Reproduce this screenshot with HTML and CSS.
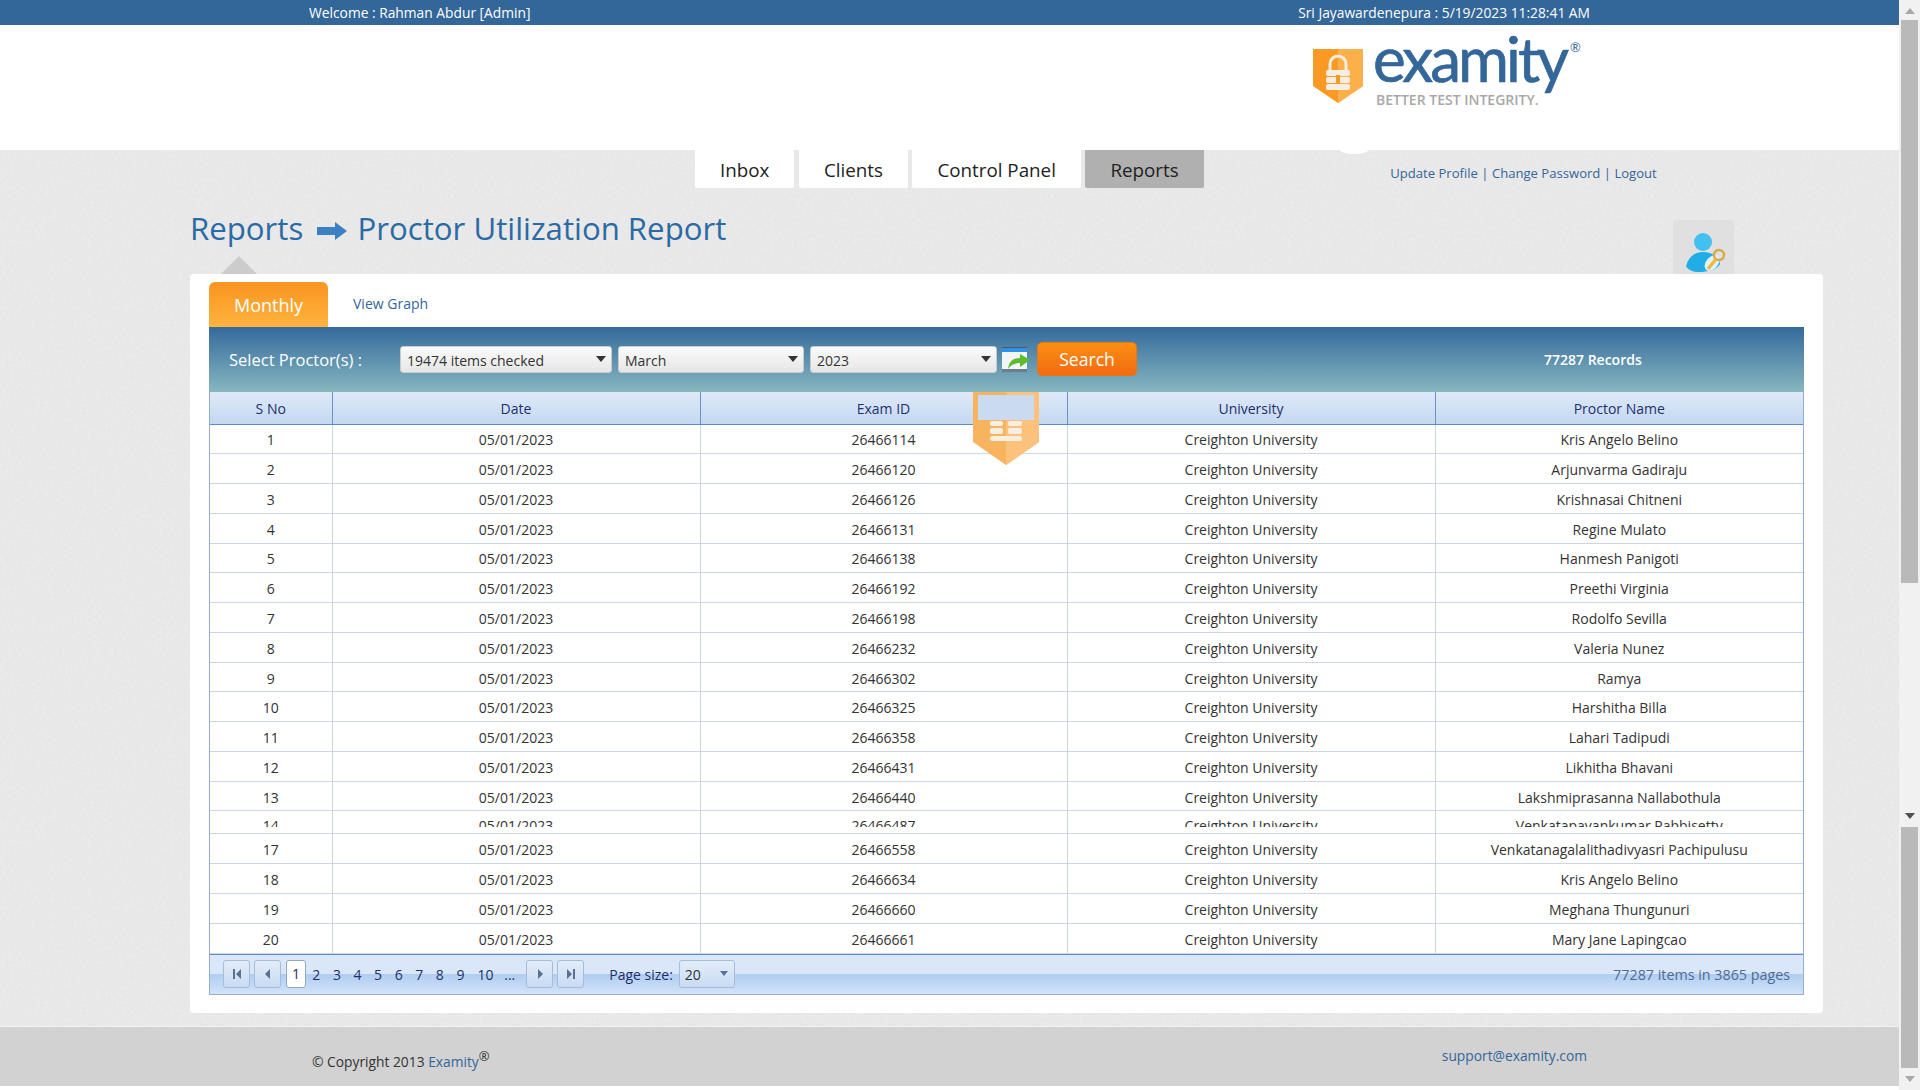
FILE: index.html
```html
<!DOCTYPE html>
<html lang="en">
<head>
    <meta charset="UTF-8">
    <title>Proctor Utilization Report</title>
    <link rel="stylesheet" href="styles.css">
</head>
<body>
    <div class="page">
        <div class="topbar">
            <span>Welcome : Rahman Abdur [Admin]</span>
            <span>Sri Jayawardenepura : 5/19/2023 11:28:41 AM</span>
        </div>

        <div class="header">
            <div class="logo">
                <svg class="logo-shield" width="50" height="54" viewBox="0 0 50 54">
                    <path d="M0 0H50V37L25 54L0 37Z" fill="#fa9a24"/>
                    <path d="M25 0H50V37L25 54Z" fill="#fdb04a"/>
                    <path d="M17 21V15a8 8 0 0 1 16 0V21" fill="none" stroke="#f6eee2" stroke-width="3"/>
                    <rect x="13" y="21" width="24" height="6" rx="2" fill="#f6eee2"/>
                    <rect x="13" y="28" width="24" height="6" rx="2" fill="#f6eee2"/>
                    <rect x="13" y="35" width="24" height="6" rx="2" fill="#f6eee2"/>
                    <rect x="23" y="26" width="4" height="9" fill="#fa9a24"/>
                </svg>
                <div class="logo-words">
                    <div class="logo-name">examity<sup>®</sup></div>
                    <div class="logo-tag">BETTER TEST INTEGRITY.</div>
                </div>
            </div>
        </div>

        <div class="main">
            <div class="nav-row">
                <a class="nav-tab">Inbox</a>
                <a class="nav-tab">Clients</a>
                <a class="nav-tab">Control Panel</a>
                <a class="nav-tab active">Reports</a>
                <div class="user-links">
                    <a>Update Profile</a> | <a>Change Password</a> | <a>Logout</a>
                </div>
            </div>

            <div class="title-row">
                <h1>Reports
                    <svg class="title-arrow" width="30" height="18" viewBox="0 0 30 18"><path d="M0 5H18V0L30 9L18 18V13H0Z" fill="#3a80c2"/></svg>
                    Proctor Utilization Report</h1>
                <div class="profile-icon">
                    <svg width="61" height="55" viewBox="0 0 61 55">
                        <circle cx="30" cy="22" r="9" fill="#43c0f0"/>
                        <path d="M13 46C16 36 22 32 30 32C38 32 46 36 47 44C44 50 34 52 26 52C20 52 15 50 13 46Z" fill="#21ade6"/>
                        <ellipse cx="39" cy="43" rx="6" ry="9" transform="rotate(40 39 43)" fill="#e4f3fb"/>
                        <circle cx="46" cy="35" r="5" fill="none" stroke="#d9a84a" stroke-width="2.5"/>
                        <path d="M43 39L35 49" stroke="#f0b93a" stroke-width="3.5" fill="none"/>
                    </svg>
                </div>
            </div>

            <div class="card">
                <span class="card-pointer"></span>
                <div class="tabs">
                    <a class="tab active">Monthly</a>
                    <a class="tab">View Graph</a>
                </div>
                <div class="toolbar">
                    <label class="toolbar-label">Select Proctor(s) :</label>
                    <div class="combo combo-proctor">19474 items checked</div>
                    <div class="combo combo-month">March</div>
                    <div class="combo combo-year">2023</div>
                    <svg class="export-icon" width="28" height="26" viewBox="0 0 28 26">
                        <rect x="0" y="0" width="25" height="25" fill="#f2f4f6"/>
                        <rect x="0" y="0" width="25" height="1" fill="#4a5a6a"/>
                        <rect x="0" y="1" width="25" height="4" fill="#2f92e6"/>
                        <rect x="0" y="22" width="25" height="3" fill="#6d7d8a"/>
                        <path d="M6 22C7 15 11 11 18 11V7L28 13L18 20V16C13 16 9 18 6 22Z" fill="#5cbb2f"/>
                    </svg>
                    <button class="search-btn" type="button">Search</button>
                    <span class="records">77287 Records</span>
                </div>

                <div class="grid">
                    <svg class="watermark" width="66" height="73" viewBox="0 0 66 73">
                        <path d="M0 0H66V50L33 73L0 50Z" fill="#f8b35f"/>
                        <path d="M33 0H66V50L33 73Z" fill="#fcc27c"/>
                        <rect x="5" y="3" width="56" height="25" fill="#c9daf1"/>
                        <rect x="17" y="29" width="13" height="5" rx="2" fill="#f7eee2"/>
                        <rect x="35" y="29" width="14" height="5" rx="2" fill="#f7eee2"/>
                        <rect x="17" y="36" width="13" height="6" rx="2" fill="#f7eee2"/>
                        <rect x="35" y="36" width="14" height="6" rx="2" fill="#f7eee2"/>
                        <rect x="17" y="44" width="32" height="5" rx="2.5" fill="#f7eee2"/>
                    </svg>
                    <table>
                        <colgroup>
                            <col class="col-no"><col class="col-date"><col class="col-exam"><col class="col-uni"><col>
                        </colgroup>
                        <thead>
                            <tr><th>S No</th><th>Date</th><th>Exam ID</th><th>University</th><th>Proctor Name</th></tr>
                        </thead>
                        <tbody>
                            <tr><td>1</td><td>05/01/2023</td><td>26466114</td><td>Creighton University</td><td>Kris Angelo Belino</td></tr>
                            <tr><td>2</td><td>05/01/2023</td><td>26466120</td><td>Creighton University</td><td>Arjunvarma Gadiraju</td></tr>
                            <tr><td>3</td><td>05/01/2023</td><td>26466126</td><td>Creighton University</td><td>Krishnasai Chitneni</td></tr>
                            <tr><td>4</td><td>05/01/2023</td><td>26466131</td><td>Creighton University</td><td>Regine Mulato</td></tr>
                            <tr><td>5</td><td>05/01/2023</td><td>26466138</td><td>Creighton University</td><td>Hanmesh Panigoti</td></tr>
                            <tr><td>6</td><td>05/01/2023</td><td>26466192</td><td>Creighton University</td><td>Preethi Virginia</td></tr>
                            <tr><td>7</td><td>05/01/2023</td><td>26466198</td><td>Creighton University</td><td>Rodolfo Sevilla</td></tr>
                            <tr><td>8</td><td>05/01/2023</td><td>26466232</td><td>Creighton University</td><td>Valeria Nunez</td></tr>
                            <tr><td>9</td><td>05/01/2023</td><td>26466302</td><td>Creighton University</td><td>Ramya</td></tr>
                            <tr><td>10</td><td>05/01/2023</td><td>26466325</td><td>Creighton University</td><td>Harshitha Billa</td></tr>
                            <tr><td>11</td><td>05/01/2023</td><td>26466358</td><td>Creighton University</td><td>Lahari Tadipudi</td></tr>
                            <tr><td>12</td><td>05/01/2023</td><td>26466431</td><td>Creighton University</td><td>Likhitha Bhavani</td></tr>
                            <tr><td>13</td><td>05/01/2023</td><td>26466440</td><td>Creighton University</td><td>Lakshmiprasanna Nallabothula</td></tr>
                            <tr class="row-cut">
                                <td><div>14</div></td><td><div>05/01/2023</div></td><td><div>26466487</div></td><td><div>Creighton University</div></td><td><div>Venkatapavankumar Pabbisetty</div></td>
                            </tr>
                            <tr><td>17</td><td>05/01/2023</td><td>26466558</td><td>Creighton University</td><td>Venkatanagalalithadivyasri Pachipulusu</td></tr>
                            <tr><td>18</td><td>05/01/2023</td><td>26466634</td><td>Creighton University</td><td>Kris Angelo Belino</td></tr>
                            <tr><td>19</td><td>05/01/2023</td><td>26466660</td><td>Creighton University</td><td>Meghana Thungunuri</td></tr>
                            <tr><td>20</td><td>05/01/2023</td><td>26466661</td><td>Creighton University</td><td>Mary Jane Lapingcao</td></tr>
                        </tbody>
                    </table>
                    <div class="pager">
                        <a class="pg-btn"><svg width="10" height="10" viewBox="0 0 10 10"><path d="M1 0H3V10H1ZM9 0V10L4 5Z" fill="#5a708f"/></svg></a>
                        <a class="pg-btn"><svg width="10" height="10" viewBox="0 0 10 10"><path d="M7 0V10L2 5Z" fill="#5a708f"/></svg></a>
                        <div class="pg-numbers">
                            <a class="pg-num current">1</a><a class="pg-num">2</a><a class="pg-num">3</a><a class="pg-num">4</a><a class="pg-num">5</a><a class="pg-num">6</a><a class="pg-num">7</a><a class="pg-num">8</a><a class="pg-num">9</a><a class="pg-num ten">10</a><a class="pg-num dots">...</a>
                        </div>
                        <a class="pg-btn"><svg width="10" height="10" viewBox="0 0 10 10"><path d="M3 0V10L8 5Z" fill="#5a708f"/></svg></a>
                        <a class="pg-btn"><svg width="10" height="10" viewBox="0 0 10 10"><path d="M1 0V10L6 5ZM7 0H9V10H7Z" fill="#5a708f"/></svg></a>
                        <span class="pg-label">Page size:</span>
                        <div class="pg-size">20</div>
                        <span class="pg-info">77287 items in 3865 pages</span>
                    </div>
                </div>
            </div>
        </div>

        <div class="footer">
            <div class="copyright">© Copyright 2013 <a>Examity</a><sup>®</sup></div>
            <a class="support">support@examity.com</a>
        </div>
    </div>

    <div class="scrollbar">
        <span class="sb-arrow up"></span>
        <div class="sb-thumb first"></div>
        <div class="sb-gap"></div>
        <span class="sb-arrow down"></span>
        <div class="sb-thumb second"></div>
        <span class="sb-arrow down light"></span>
    </div>
</body>
</html>
```

FILE: styles.css
```css
/* Styles for the page */
* {
    box-sizing: border-box;
}

body {
    font-family: "Open Sans", Arial, sans-serif;
    font-size: 14px;
    color: #333;
    background-color: #fff;
    margin: 0;
    height: 1090px;
    overflow: hidden;
    display: flex;
}

a {
    color: #336699;
    text-decoration: none;
}

.page {
    width: 1899px;
    height: 1086px;
    display: flex;
    flex-direction: column;
}

/* top strip */
.topbar {
    height: 25px;
    background-color: #336699;
    color: #fff;
    font-size: 13.8px;
    padding: 0 309px;
    display: flex;
    justify-content: space-between;
    align-items: center;
    line-height: 25px;
}

.header {
    height: 125px;
    background-color: #fff;
    padding: 13px 0 0 1313px;
    position: relative;
}

.header::after {
    content: "";
    position: absolute;
    left: 1340px;
    bottom: -4px;
    width: 28px;
    height: 8px;
    border-radius: 50%;
    background-color: #fff;
}

.logo {
    display: flex;
    align-items: flex-start;
}

.logo-shield {
    margin-top: 11px;
}

.logo-words {
    margin: -10px 0 0 10px;
}

.logo-name {
    font-family: Lato, "Open Sans", sans-serif;
    font-size: 62px;
    line-height: 60px;
    color: #336699;
    letter-spacing: -3px;
    -webkit-text-stroke: 0.7px #336699;
    white-space: nowrap;
}

.logo-name sup {
    font-size: 13px;
    line-height: 1;
    letter-spacing: 0;
    -webkit-text-stroke: 0;
    vertical-align: 30px;
    margin-left: 4px;
}

.logo-tag {
    font-size: 14px;
    line-height: 14px;
    font-weight: 600;
    color: #a8a8a8;
    margin: 5px 0 0 3px;
    white-space: nowrap;
}

.main {
    flex: 1;
    background-color: #e7e7e7;
    background-image: url("data:image/svg+xml,%3Csvg xmlns='http://www.w3.org/2000/svg' width='300' height='300'%3E%3Cfilter id='n'%3E%3CfeTurbulence type='fractalNoise' baseFrequency='.35' numOctaves='3'/%3E%3CfeColorMatrix values='0 0 0 0 1 0 0 0 0 1 0 0 0 0 1 0 0 0 .9 -.3'/%3E%3C/filter%3E%3Crect width='300' height='300' filter='url(%23n)' opacity='.35'/%3E%3C/svg%3E");
}

/* main menu */
.nav-row {
    height: 39px;
    padding-left: 695px;
    display: flex;
    gap: 4.5px;
}

.nav-tab {
    background-color: #fff;
    color: #222;
    font-size: 18.8px;
    line-height: 40px;
    padding: 0 25px;
    height: 38px;
    border-radius: 0 0 2px 2px;
}

.nav-tab.active {
    background-color: #b0b0b0;
}

.user-links {
    margin-left: 182px;
    font-size: 13.1px;
    line-height: 46px;
    color: #336699;
}

.title-row {
    height: 85px;
    padding-left: 190px;
    display: flex;
    justify-content: space-between;
}

h1 {
    margin: 17px 0 0;
    font-size: 31.2px;
    font-weight: 400;
    line-height: 44px;
    color: #2a6aa5;
}

.title-arrow {
    margin: 0 2px 0 6px;
}

.profile-icon {
    width: 61px;
    height: 55px;
    margin: 31px 165px 0 0;
    background-color: #e0e0e0;
    border-radius: 3px;
}

/* white panel */
.card {
    position: relative;
    width: 1633px;
    height: 739px;
    margin-left: 190px;
    padding: 8px 19px 0;
    background-color: #fff;
    border-radius: 4px;
}

.card-pointer {
    position: absolute;
    left: 31px;
    top: -18px;
    border-left: 18px solid transparent;
    border-right: 18px solid transparent;
    border-bottom: 18px solid #ccc;
}

.tabs {
    display: flex;
    height: 45px;
}

.tab {
    padding: 0 25px;
    line-height: 44px;
}

.tab.active {
    width: 119px;
    padding: 0;
    text-align: center;
    font-size: 18px;
    line-height: 46px;
    color: #fff;
    background: linear-gradient(#f9951f, #ffb340);
    border-radius: 6px 6px 0 0;
}

.toolbar {
    height: 65px;
    background: linear-gradient(#346a9c, #87b7c0);
    display: flex;
    align-items: center;
    color: #fff;
}

.toolbar-label {
    width: 191px;
    padding-left: 20px;
    font-size: 16.5px;
}

.combo {
    height: 27px;
    margin-right: 6px;
    padding-left: 6px;
    line-height: 28px;
    color: #333;
    background: linear-gradient(#fbfbfb, #e6e6e6);
    border: 1px solid #c8ccd0;
    border-radius: 3px;
    position: relative;
}

.combo::after {
    content: "";
    position: absolute;
    right: 5px;
    top: 9px;
    border-left: 5px solid transparent;
    border-right: 5px solid transparent;
    border-top: 6px solid #333;
}

.combo-proctor {
    width: 212px;
}

.combo-month {
    width: 186px;
}

.combo-year {
    width: 187px;
    margin-right: 5px;
}

.export-icon {
    margin-right: 7px;
}

.search-btn {
    width: 100px;
    height: 34px;
    margin-bottom: 1px;
    font-family: inherit;
    font-size: 17.6px;
    color: #fff;
    background: linear-gradient(#fb8f12, #f26a12);
    border: 1px solid #e9760f;
    border-radius: 5px;
    cursor: pointer;
}

.records {
    margin-left: 407px;
    font-weight: 600;
}

/* report grid */
.grid {
    position: relative;
    border: 1px solid #92aed3;
    border-top: 0;
}

.watermark {
    position: absolute;
    left: 763px;
    top: 0;
}

table {
    width: 100%;
    border-collapse: collapse;
    table-layout: fixed;
}

.col-no {
    width: 122px;
}

.col-date,
.col-uni {
    width: 368px;
}

.col-exam {
    width: 367px;
}

th {
    height: 32px;
    padding: 2px 0 0;
    font-size: 14px;
    font-weight: 400;
    color: #1e2f6b;
    background: linear-gradient(#dfe9f7, #c3d8f1);
    border-right: 1px solid #6c90c8;
    border-bottom: 1px solid #5d8ccb;
}

td {
    height: 29.77px;
    padding: 2px 0 0;
    text-align: center;
    border-right: 1px solid #cdd6e6;
    border-bottom: 1px solid #cdd6e6;
}

th:last-child,
td:last-child {
    border-right: 0;
}

.row-cut td {
    height: 23px;
    padding: 0;
    vertical-align: top;
}

.row-cut div {
    height: 16px;
    line-height: 30px;
    overflow: hidden;
}

.pager {
    height: 40px;
    padding-left: 13px;
    display: flex;
    align-items: center;
    background: linear-gradient(#d9e7f9 0, #d9e7f9 49%, #b0cdf2 50%, #d3e3f9 100%);
    border-top: 1px solid #5d8ccb;
}

.pg-btn {
    width: 27px;
    height: 28px;
    margin-right: 4px;
    display: flex;
    justify-content: center;
    align-items: center;
    background: linear-gradient(#e3edfa, #c8dbf3);
    border: 1px solid #a5bcdc;
    border-radius: 3px;
}

.pg-numbers {
    display: flex;
    align-items: center;
    margin: 0 7px 0 1px;
}

.pg-num {
    width: 20.6px;
    text-align: center;
    color: #1e2f6b;
}

.pg-num.ten {
    width: 29.5px;
}

.pg-num.dots {
    width: 19px;
}

.pg-num.current {
    width: 20px;
    height: 28px;
    line-height: 26px;
    background-color: #fff;
    border: 1px solid #8fa8cc;
    border-radius: 3px;
}

.pg-label {
    margin-left: 21px;
    color: #1e2f6b;
}

.pg-size {
    width: 56px;
    height: 28px;
    margin-left: 6px;
    padding-left: 5px;
    line-height: 28px;
    background: linear-gradient(#e3edfa, #c8dbf3);
    border: 1px solid #a5bcdc;
    border-radius: 3px;
    position: relative;
}

.pg-size::after {
    content: "";
    position: absolute;
    right: 6px;
    top: 10px;
    border-left: 4px solid transparent;
    border-right: 4px solid transparent;
    border-top: 5px solid #5a7099;
}

.pg-info {
    margin-left: auto;
    padding-right: 13px;
    font-size: 14.3px;
    color: #4e6b95;
}

.footer {
    height: 60px;
    background-color: #d2d2d2;
    border-top: 1px solid #f2f2f2;
    display: flex;
    justify-content: space-between;
    padding: 19px 312px 0;
}

.copyright {
    padding-top: 1px;
    font-size: 13.8px;
}

.copyright sup {
    font-size: 13px;
}

.support {
    font-size: 13.8px;
}

/* page scrollbar */
.scrollbar {
    width: 21px;
    display: flex;
    flex-direction: column;
    align-items: center;
    background-color: #f1f1f1;
}

.sb-thumb {
    width: 17px;
    background-color: #b9b9b9;
}

.sb-thumb.first {
    height: 563px;
}

.sb-gap {
    height: 230px;
}

.sb-thumb.second {
    height: 241px;
}

.sb-arrow {
    width: 0;
    height: 0;
    border-left: 5px solid transparent;
    border-right: 5px solid transparent;
}

.sb-arrow.up {
    margin: 8px 0 6px;
    border-bottom: 6px solid #a8a8a8;
}

.sb-arrow.down {
    margin: 0 0 8px;
    border-top: 6px solid #505050;
}

.sb-arrow.down.light {
    margin: 8px 0 0;
    border-top-color: #a8a8a8;
}
```
